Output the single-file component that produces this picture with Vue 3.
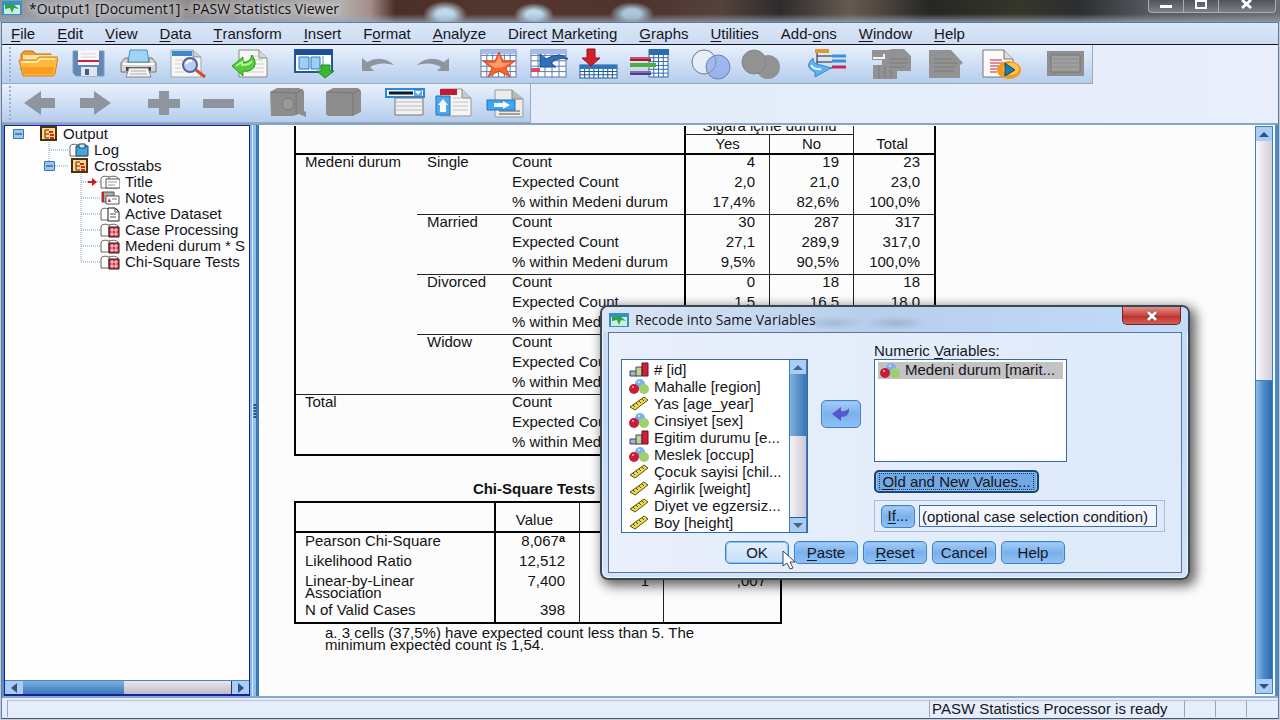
<script setup>
const menus = [
  ['', 'F', 'ile'], ['', 'E', 'dit'], ['', 'V', 'iew'], ['', 'D', 'ata'], ['', 'T', 'ransform'],
  ['', 'I', 'nsert'], ['F', 'o', 'rmat'], ['', 'A', 'nalyze'], ['Direct ', 'M', 'arketing'],
  ['', 'G', 'raphs'], ['', 'U', 'tilities'], ['Add-', 'o', 'ns'], ['', 'W', 'indow'], ['', 'H', 'elp']
]

const page = '<path d="M7 2h20l8 8v19H7z" fill="#f7f7f5" stroke="#888"/><path d="M27 2v8h8" fill="#ddd" stroke="#888"/>'
const cells = (x, y, w, h, c, r, col) => {
  let s = `<rect x="${x}" y="${y}" width="${w}" height="${h}" fill="#fff" stroke="${col}"/>`
  for (let i = 1; i < c; i++) s += `<path d="M${x + (w * i) / c} ${y}v${h}" stroke="${col}"/>`
  for (let i = 1; i < r; i++) s += `<path d="M${x} ${y + (h * i) / r}h${w}" stroke="${col}"/>`
  return s
}
const art = {
  open: '<path d="M3 22V6l3-3h9l3 3h15v5H8z" fill="#f59a2c" stroke="#c96e10"/><path d="M5 7h31v6H5z" fill="#ffe3a0"/><path d="M1 12h17l3-3h19l-3 17-2 2H5z" fill="#fdb83d" stroke="#d9801a"/><path d="M3 14h16l3-3h15" fill="none" stroke="#ffe9a8" stroke-width="2"/><path d="M5 26h30l1-7H4z" fill="#f89c22"/>',
  save: '<path d="M5 3h31v25H8l-3-3z" fill="#5f88b4" stroke="#7f9fc0"/><path d="M10 2h21v15H10z" fill="#f4f6fa"/><path d="M13 6h15M13 9h15" stroke="#d4d8e0"/><path d="M10 13h21" stroke="#d0203c" stroke-width="2"/><path d="M13 19h16v9H13z" fill="#dfe5ec"/><path d="M17 21h4v6h-4z" fill="#435f80"/>',
  print: '<path d="M12 2h17l2 12H10z" fill="#9ed3f5" stroke="#4c8fc4"/><path d="M7 10h3v5h21v-5h3l4 5v9H3v-9z" fill="#d4d4d4" stroke="#777"/><path d="M5 16h31" stroke="#fff" stroke-width="2"/><path d="M8 19h25v4H8z" fill="#444"/><path d="M11 20h19l3 9H8z" fill="#f4f4f4" stroke="#888"/><path d="M13 23h15M12 26h17" stroke="#aaa"/>',
  find: '<path d="M3 2h22l8 7v20H3z" fill="#f7f7f7" stroke="#9aa"/><path d="M25 2v7h8" fill="#ccd" stroke="#889"/><path d="M4 3h20v5H4z" fill="#3d87c8"/><path d="M7 12h8M7 16h6M7 20h6M7 24h9" stroke="#ccc"/><path d="M28 22l9 7" stroke="#d8482c" stroke-width="3"/><circle cx="22" cy="17" r="7" fill="#b9cdf3" stroke="#5560a0" stroke-width="2"/><path d="M18 16q2-4 6-3" stroke="#fff" fill="none" stroke-width="2"/>',
  export: page + '<path d="M17 8h14M17 12h14M17 16h15M15 20h17M15 24h17" stroke="#ccc"/><path d="M0 18l11-9v5q7 1 9-7 7 10-1 15-3 2-8 1v5z" fill="#55cc38" stroke="#2c9a20"/><path d="M4 18l6-4v3q8 0 10-4" stroke="#b4f49a" fill="none" stroke-width="2"/>',
  recall: '<path d="M1 2h37v22H1z" fill="#fff" stroke="#24549a" stroke-width="2"/><path d="M1 1h37v6H1z" fill="#1d4f98"/><path d="M5 9h10v12H5zM17 9h9v12h-9z" fill="#9bd0f4" stroke="#2d77bd"/><path d="M29 8v15" stroke="#9bd0f4" stroke-width="2"/><path d="M27 17h9v6h4l-9 7-8-7h4z" fill="#39b92e" stroke="#1f861d"/>',
  undo: '<path d="M4 10v13h12l-4-4q10-6 24-2Q24 6 9 14z" fill="#8f959e"/>',
  redo: '<path d="M36 10v13H24l4-4Q18 13 4 17 16 6 31 14z" fill="#8f959e"/>',
  star: cells(2, 2, 35, 27, 6, 5, '#5f7ab4') + '<path d="M2 2h35v4H2z" fill="#a7bcea"/><path d="M20 4l4 9h12l-9 7 4 9-11-6-11 6 4-9-9-7h12z" fill="#f4672c" stroke="#d9481c"/><path d="M20 7l3 8h8l-7 4-8 1-7-5h8z" fill="#ff9b70"/>',
  gocase: cells(2, 2, 35, 27, 5, 5, '#5f7ab4') + '<path d="M2 2h35v4H2z" fill="#a7bcea"/><path d="M2 20h9v4H2z" fill="#d94a6c"/><path d="M11 6v13h16l-5-4q6-6 17-4-8-8-22 0z" fill="#2f70bd" stroke="#1d4f8f"/>',
  govar: cells(1, 17, 37, 13, 8, 4, '#1f5b9c') + '<path d="M1 17h37v4H1z" fill="#2b79bd"/><path d="M8 1h8v9h5l-9 8-9-8h5z" fill="#d21f28" stroke="#93131a"/>',
  vars: cells(20, 2, 19, 27, 4, 7, '#2b6cb0') + '<path d="M20 1h20v6H20z" fill="#2b6cb0"/><path d="M1 11h21" stroke="#a71c35" stroke-width="4"/><path d="M1 17h26" stroke="#4faf37" stroke-width="4"/><path d="M1 25h21" stroke="#39459c" stroke-width="4"/><path d="M1 10h21M1 24h21" stroke="#e58a9a"/>',
  rings: '<circle cx="13" cy="14" r="12" fill="#eef2f8" fill-opacity=".7" stroke="#8b93a3"/><circle cx="27" cy="19" r="12" fill="#8fabed" fill-opacity=".8" stroke="#7480a8"/><circle cx="13" cy="14" r="12" fill="none" stroke="#8b93a3"/>',
  blobs: '<circle cx="13" cy="14" r="12" fill="#929292"/><circle cx="27" cy="19" r="12" fill="#929292"/><circle cx="13" cy="14" r="12" fill="none" stroke="#858585"/>',
  flow: '<path d="M10 4v13M10 8h15M10 14h15M10 20h15" stroke="#222" fill="none"/><path d="M8 3h14" stroke="#e8962c" stroke-width="4"/><path d="M25 8h14M25 13h14" stroke="#3d8fd6" stroke-width="3"/><path d="M25 19h14" stroke="#c02a55" stroke-width="3"/><path d="M6 10q-10 9 2 14v5l16-9-10-3q-8 0-8-7z" fill="#5fb2ef" stroke="#3a86c9"/><path d="M4 17q3 5 10 4" fill="none" stroke="#dff2ff" stroke-width="2"/>',
  pages: '<path d="M1 2h16l4-1h12l7 7v15H26v8H2V17h9v-5H1z" fill="#929292"/><path d="M2 10h11V6" stroke="#f3f5f8" stroke-width="2" fill="none"/><path d="M19 11h18M19 15h18M19 19h15M8 18v12M14 18v12M20 22v8" stroke="#7c7c7c"/>',
  note: '<path d="M3 2h22l12 13-3 2v13H3z" fill="#929292"/><path d="M8 11h18M8 15h24M8 19h22M8 23h20" stroke="#7c7c7c"/>',
  script: '<path d="M2 2h21l9 9v18H2z" fill="#fafafa" stroke="#777"/><path d="M23 2v9h9" fill="#ddd" stroke="#777"/><path d="M9 12h12M9 15h15M9 18h9M9 21h10M9 24h7" stroke="#c3203c"/><ellipse cx="28" cy="22" rx="12" ry="9" fill="#f29a1c"/><ellipse cx="30" cy="21" rx="8" ry="6" fill="#ffc452"/><path d="M24 15l10 7-10 6z" fill="#1e7da8" stroke="#0e4d70"/>',
  frame: '<path d="M2 3h37v25H2z" fill="#8f8f8f"/><path d="M6 7h29v17H6z" fill="#9e9e9e" stroke="#777"/><path d="M8 11h25M8 15h25M8 19h25" stroke="#8c8c8c"/>',
  left: '<path d="M4 16L21 4v7h14v10H21v7z" fill="#8f959e"/>',
  right: '<path d="M36 16L19 4v7H5v10h14v7z" fill="#8f959e"/>',
  plus: '<path d="M15 4h10v8h11v9H25v7H15v-7H4v-9h11z" fill="#8f959e"/>',
  minus: '<path d="M4 12h31v9H4z" fill="#8f959e"/>',
  book1: '<path d="M2 5l7-4h22l5 3v20l2 1v5l-7-3-6 2H3z" fill="#8d8d8d"/><path d="M3 5l25 1v22M28 6l7-4" stroke="#777" fill="none"/><circle cx="20" cy="17" r="6" fill="#999" stroke="#7a7a7a"/>',
  book2: '<path d="M3 5l7-4h25l3 3v21l-8 4H5l-2-2z" fill="#8d8d8d"/><path d="M4 5l26 1v22M30 6l7-3" stroke="#777" fill="none"/>',
  combo: '<path d="M1 2h38v8H1z" fill="#eaf5ff" stroke="#2d86d8" stroke-width="2"/><path d="M4 6h24" stroke="#0b1a33" stroke-width="3"/><path d="M29 3h8v6h-8z" fill="#5aa8ea"/><path d="M30 4h6l-3 4z" fill="#fff"/><path d="M10 11h28v17H10z" fill="#f2f2f2" stroke="#777"/><path d="M11 15h26M11 19h26M11 23h26" stroke="#bbb"/>',
  promote: '<path d="M6 2h21l9 9v18H6z" fill="#f5f5f5" stroke="#999"/><path d="M27 2v9h9" fill="#ccc" stroke="#888"/><path d="M5 2h17v6H5z" fill="#c5192e"/><path d="M18 11h8M18 15h15M18 19h15M18 23h15" stroke="#c4c4c4"/><path d="M1 9h14v19H1z" fill="#4fa9ea" stroke="#1d72bd"/><path d="M8 12l5 6h-2v7H5v-7H3z" fill="#f4fbff"/>',
  insert: '<path d="M10 3h17l11 9v18H10z" fill="#ecece8" stroke="#999"/><path d="M27 3v9h11" fill="#bbb" stroke="#888"/><path d="M14 27h21M14 24h21" stroke="#555"/><path d="M2 13h28v10H2z" fill="#42a5ee" stroke="#1b74c4"/><path d="M9 16h9v-2l7 4-7 4v-2H9z" fill="#f4fbff"/>'
}
const bar1 = [
  { items: ['open', 'save', 'print', 'find'] }, { items: ['export'] }, { items: ['recall'], near: true },
  { items: ['undo', 'redo'], loose: true }, { items: ['star', 'gocase', 'govar', 'vars'], far: true },
  { items: ['rings', 'blobs'], near: true }, { items: ['flow'], far: true },
  { items: ['pages', 'note', 'script'], loose: true }, { items: ['frame'] }
]
const bar2 = [
  { items: ['left', 'right'], loose: true }, { items: ['plus', 'minus'], loose: true, far: true },
  { items: ['book1', 'book2'], loose: true, far: true }, { items: ['combo', 'promote', 'insert'], near: true }
]

const book = '<path d="M1 14V4q2-3 8-1 6-2 9 1v10z" fill="#fff" stroke="#666"/><path d="M9 3v10" stroke="#666"/>'
const nodeArt = {
  root: '<path d="M3 1h15v13H3z" fill="#fbdc86" stroke="#4a3315" stroke-width="2"/><path d="M2 4h2M2 7h2M2 10h2" stroke="#222"/><path d="M7 4v8M7 4h4M7 8h4M7 12h4" stroke="#7a1d12"/><path d="M11 6h4M12 9h4M12 12h4" stroke="#d22" stroke-width="2"/>',
  log: book + '<path d="M7 4h12v10H7z" fill="#4aa5d4" stroke="#134a6e"/><path d="M10 2h6v4h-6z" fill="#cdeafa" stroke="#134a6e"/>',
  title: book + '<path d="M6 5h14v9H6z" fill="#fff" stroke="#555"/><path d="M8 8h9M8 11h7" stroke="#999"/>',
  notes: '<path d="M2 2h12v10H2z" fill="#aaa" stroke="#555"/><path d="M3 2v10" stroke="#c22" stroke-width="2"/><path d="M6 6h13v8H6z" fill="#fff" stroke="#555"/><path d="M9 8l-1 4h3z" fill="#c2185b"/><path d="M12 9h5" stroke="#777"/>',
  data: book + '<path d="M8 2h7l4 4v9H8z" fill="#fff" stroke="#222"/><path d="M15 2v4h4M10 8h6M10 11h6" stroke="#555" fill="none"/>',
  table: book + '<path d="M9 5h10v10H9z" fill="#c8384c" stroke="#301015"/><path d="M10 8h8M10 12h8M12 6v8M16 6v8" stroke="#f6dede"/>'
}
const tree = [
  { d: 0, i: 'root', t: 'Output' }, { d: 1, i: 'log', t: 'Log' }, { d: 1, i: 'root', t: 'Crosstabs', box: true },
  { d: 2, i: 'title', t: 'Title', now: true }, { d: 2, i: 'notes', t: 'Notes' }, { d: 2, i: 'data', t: 'Active Dataset' },
  { d: 2, i: 'table', t: 'Case Processing' }, { d: 2, i: 'table', t: 'Medeni durum * S' },
  { d: 2, i: 'table', t: 'Chi-Square Tests', last: true }
]
const gutter = [32, 63, 94]

const L = ['Count', 'Expected Count', '% within Medeni durum']
const rows = [
  ['Medeni durum', 'Single', L[0], '4', '19', '23'], ['', '', L[1], '2,0', '21,0', '23,0'], ['', '', L[2], '17,4%', '82,6%', '100,0%'],
  ['', 'Married', L[0], '30', '287', '317'], ['', '', L[1], '27,1', '289,9', '317,0'], ['', '', L[2], '9,5%', '90,5%', '100,0%'],
  ['', 'Divorced', L[0], '0', '18', '18'], ['', '', L[1], '1,5', '16,5', '18,0'], ['', '', L[2], '', '', ''],
  ['', 'Widow', L[0], '', '', ''], ['', '', L[1], '', '', ''], ['', '', L[2], '', '', ''],
  ['Total', '', L[0], '', '', ''], ['', '', L[1], '', '', ''], ['', '', L[2], '', '', '']
]

const varArt = {
  ord: '<path d="M1 10h7v5H1z" fill="#9db4d8" stroke="#445"/><path d="M7 6h6v9H7z" fill="#b9d6a0" stroke="#445"/><path d="M13 2h6v13h-6z" fill="#cf2039" stroke="#612"/>',
  nom: '<circle cx="11" cy="6" r="5" fill="#7fb0ea"/><circle cx="15" cy="11" r="5" fill="#9fd070"/><circle cx="5" cy="11" r="5" fill="#c81f38"/><circle cx="4" cy="9" r="1" fill="#f8b8b8"/><circle cx="10" cy="4" r="1" fill="#dcecff"/>',
  scale: '<path d="M1 12L15 2l4 3L6 15z" fill="#ecd84c" stroke="#55501a"/><path d="M4 10l2 2M7 8l2 2M10 6l2 2M13 4l2 2" stroke="#55501a"/>'
}
const vars = [
  ['ord', '# [id]'], ['nom', 'Mahalle [region]'], ['scale', 'Yas [age_year]'], ['nom', 'Cinsiyet [sex]'],
  ['ord', 'Egitim durumu [e...'], ['nom', 'Meslek [occup]'], ['scale', 'Çocuk sayisi [chil...'],
  ['scale', 'Agirlik [weight]'], ['scale', 'Diyet ve egzersiz...'], ['scale', 'Boy [height]']
]
const actions = [['', 'OK'], ['P', 'aste'], ['R', 'eset'], ['', 'Cancel'], ['', 'Help']]
</script>

<template>
  <div class="app">
    <header class="titlebar">
      <svg class="logo" viewBox="0 0 20 16"><path d="M0 1h20v14H0z" fill="#3391c4" /><path d="M2 5h16v9H2z" fill="#c9efdc" /><path d="M3 5l8-1 6 5-5-1-2 5-2-5-5 1z" fill="#2fa34b" /></svg>
      <span class="caption">*Output1 [Document1] - PASW Statistics Viewer</span>
      <div class="winbtns">
        <button aria-label="Minimize"><svg viewBox="0 0 14 12"><path d="M1 5h12v3H1z" fill="#fff" /></svg></button>
        <button aria-label="Maximize"><svg viewBox="0 0 14 12"><path d="M2 1h10v7H2z" fill="none" stroke="#fff" stroke-width="2" /></svg></button>
        <button class="x" aria-label="Close"><svg viewBox="0 0 14 12"><path d="M2 0l9 8M11 0L2 8" stroke="#fff" stroke-width="3" /></svg></button>
      </div>
    </header>

    <div class="frame">
      <nav class="menubar">
        <button v-for="m in menus" :key="m.join('')">{{ m[0] }}<u>{{ m[1] }}</u>{{ m[2] }}</button>
      </nav>
      <div class="bars">
        <div v-for="(bar, n) in [bar1, bar2]" :key="n" class="toolbar" :class="{ second: n === 1 }">
          <div v-for="(g, k) in bar" :key="k" class="group" :class="{ near: g.near, far: g.far, loose: g.loose }">
            <button v-for="i in g.items" :key="i" :aria-label="i"><svg viewBox="0 0 40 32" v-html="art[i]"></svg></button>
          </div>
        </div>
      </div>

      <main class="split">
        <aside class="outline">
          <ul class="tree">
            <li v-for="r in tree" :key="r.t">
              <svg :width="gutter[r.d]" height="16" :viewBox="`0 0 ${gutter[r.d]} 16`">
                <g stroke="#7f9fc4" stroke-dasharray="1 1" fill="none">
                  <path v-if="r.d === 1" :d="r.box ? 'M43 0v8h20' : 'M43 0v16M43 8h20'" />
                  <path v-if="r.d === 2" :d="r.last ? 'M75 0v8h19' : 'M75 0v16M75 8h19'" />
                </g>
                <g v-if="r.d === 0 || r.box" :transform="r.d === 0 ? 'translate(7 3)' : 'translate(38 3)'">
                  <path d="M.5 .5h10v9H.5z" fill="#9cc7f2" stroke="#3d74b8" /><path d="M2 5h7" stroke="#123a78" />
                </g>
                <path v-if="r.now" d="M82 7h4V4l5 4-5 4V9h-4z" fill="#d3122c" />
              </svg>
              <svg class="node" viewBox="0 0 20 16" v-html="nodeArt[r.i]"></svg>
              <span>{{ r.t }}</span>
            </li>
          </ul>
          <div class="hscroll">
            <button aria-label="Scroll left"><svg viewBox="0 0 12 12"><path d="M9 1v10L3 6z" fill="#34507c" /></svg></button>
            <div class="hthumb"></div>
            <div class="htrack"></div>
            <button class="end" aria-label="Scroll right"><svg viewBox="0 0 12 12"><path d="M3 1v10l6-5z" fill="#34507c" /></svg></button>
          </div>
        </aside>
        <div class="divider"><svg viewBox="0 0 6 14"><path d="M3 0v14" stroke="#28548c" stroke-width="3" stroke-dasharray="2 1" /></svg></div>

        <section class="viewer">
          <div class="doc">
            <table class="cross">
              <colgroup><col class="w121"><col class="w85"><col class="w182"><col class="w85"><col class="w84"><col class="w81"></colgroup>
              <thead>
                <tr class="top"><th colspan="3"></th><th colspan="2" class="thick"><div class="cut"><span>Sigara içme durumu</span></div></th><th class="thin"></th></tr>
                <tr class="names"><th colspan="3"></th><th class="thick line">Yes</th><th class="thin line">No</th><th class="thin sum">Total</th></tr>
              </thead>
              <tbody>
                <tr v-for="(r, n) in rows" :key="n" :class="{ first: n === 0, start: n > 0 && n % 3 === 0, whole: n === 12 }">
                  <td v-for="(c, k) in r" :key="k" :class="{ num: k > 2, thick: k === 3, thin: k > 3 }">{{ c }}</td>
                </tr>
              </tbody>
            </table>

            <table class="chi">
              <caption>Chi-Square Tests</caption>
              <colgroup><col class="w198"><col class="w85"><col class="w84"><col class="w117"></colgroup>
              <thead><tr><th></th><th class="thick">Value</th><th class="thin"></th><th class="thin"></th></tr></thead>
              <tbody>
                <tr><td>Pearson Chi-Square</td><td class="num thick">8,067<sup>a</sup></td><td class="thin"></td><td class="thin"></td></tr>
                <tr><td>Likelihood Ratio</td><td class="num thick">12,512</td><td class="thin"></td><td class="thin"></td></tr>
                <tr class="tall"><td><div class="tight">Linear-by-Linear<br>Association</div></td><td class="num thick">7,400</td><td class="num thin">1</td><td class="num thin">,007</td></tr>
                <tr><td>N of Valid Cases</td><td class="num thick">398</td><td class="thin"></td><td class="thin"></td></tr>
              </tbody>
            </table>
            <p class="foot">a. 3 cells (37,5%) have expected count less than 5. The<br>minimum expected count is 1,54.</p>
          </div>
          <div class="vscroll">
            <button aria-label="Scroll up"><svg viewBox="0 0 12 12"><path d="M1 9h10L6 4z" fill="#34507c" /></svg></button>
            <div class="vtrack"></div>
            <div class="vthumb"></div>
            <button aria-label="Scroll down"><svg viewBox="0 0 12 12"><path d="M1 4h10L6 9z" fill="#34507c" /></svg></button>
          </div>
        </section>
      </main>

      <footer class="status">
        <span class="grow"></span><span class="msg">PASW Statistics Processor is ready</span><span class="slot"></span><span class="slot"></span><span class="slot"></span>
      </footer>
    </div>

    <div class="dialog" role="dialog" aria-labelledby="dlg">
      <div class="dtitle">
        <svg class="logo" viewBox="0 0 20 16"><path d="M0 1h20v14H0z" fill="#3391c4" /><path d="M2 5h16v9H2z" fill="#c9efdc" /><path d="M3 5l8-1 6 5-5-1-2 5-2-5-5 1z" fill="#2fa34b" /></svg>
        <span id="dlg">Recode into Same Variables</span>
        <button class="close" aria-label="Close"><svg viewBox="0 0 14 12"><path d="M3 2l8 8M11 2l-8 8" stroke="#6b2a2a" stroke-width="4" /><path d="M3 2l8 8M11 2l-8 8" stroke="#fff" stroke-width="3" /></svg></button>
      </div>
      <div class="dbody">
        <div class="cols">
          <div class="source">
            <ul>
              <li v-for="v in vars" :key="v[1]"><svg class="kind" viewBox="0 0 20 16" v-html="varArt[v[0]]"></svg>{{ v[1] }}</li>
            </ul>
            <div class="lscroll">
              <button aria-label="Up"><svg viewBox="0 0 12 12"><path d="M1 9h10L6 4z" fill="#47658f" /></svg></button>
              <div class="lthumb"></div>
              <div class="ltrack"></div>
              <button aria-label="Down"><svg viewBox="0 0 12 12"><path d="M1 4h10L6 9z" fill="#47658f" /></svg></button>
            </div>
          </div>
          <button class="btn move" aria-label="Move variable"><svg viewBox="0 0 20 16"><path d="M1 8l9-7v4q5 1 8-3 1 9-8 9v4z" fill="#5558cc" /></svg></button>
          <div class="target">
            <div id="nv" class="lbl">Numeric <u>V</u>ariables:</div>
            <ul class="picked" aria-labelledby="nv"><li><svg class="kind" viewBox="0 0 20 16" v-html="varArt.nom"></svg>Medeni durum [marit...</li></ul>
            <button class="btn old"><span><u>O</u>ld and New Values...</span></button>
            <div class="cond">
              <button class="btn if"><u>If</u>...</button>
              <input aria-label="Case selection condition" readonly value="(optional case selection condition)">
            </div>
          </div>
        </div>
        <div class="actions">
          <button v-for="a in actions" :key="a[1]" class="btn" :class="{ hot: a[1] === 'OK' }"><u>{{ a[0] }}</u>{{ a[1] }}</button>
        </div>
      </div>
    </div>
    <svg class="pointer" viewBox="0 0 14 20"><path d="M1 1v15l4-3 3 6 3-1-3-6h5z" fill="#fff" stroke="#445" /></svg>
  </div>
</template>

<style>
body { margin: 0; }
</style>

<style scoped>
* { box-sizing: border-box; }
.app {
  height: 100vh; display: flex; flex-direction: column; position: relative; overflow: hidden;
  font-family: "Liberation Sans", Arial, sans-serif; font-size: 15px; line-height: 16px; color: #15151c;
  background: #c4cddc;
}
button { font: inherit; color: inherit; margin: 0; padding: 0; border: 0; background: none; display: flex; align-items: center; justify-content: center; white-space: pre; }
ul { list-style: none; margin: 0; padding: 0; }
u { text-underline-offset: 2px; }
svg { display: block; flex: none; }

.titlebar {
  height: 22px; flex: none; display: flex; align-items: flex-start; padding-left: 2px;
  background:
    linear-gradient(to bottom, transparent 14px, rgba(150, 165, 185, .75) 22px),
    radial-gradient(ellipse 22px 14px at 445px 15px, #bcd8ea 40%, transparent 100%),
    radial-gradient(ellipse 20px 12px at 534px 15px, #bcd8ea 40%, transparent 100%),
    radial-gradient(ellipse 22px 12px at 632px 14px, #a9c6da 40%, transparent 100%),
    linear-gradient(to right, #8f9299 0, #a5a5aa 80px, #8c8888 200px, #b3afae 340px, #a58f8c 370px, #4c2e28 395px, #54372f 500px, #4d332e 640px, #55423c 720px, #2f2b2c 780px, #665a50 850px, #262624 930px, #37362a 1020px, #2c2e30 1080px, #565960 1150px, #6a6d74 1280px);
}
.logo { width: 20px; height: 16px; }
.caption { flex: 1; margin-left: 7px; font: 14px/18px "Open Sans", "Noto Sans", sans-serif; color: #101014; text-shadow: 0 0 6px #e4e4e8, 0 0 6px #e4e4e8; }
.winbtns { display: flex; margin-right: 4px; border: 1px solid #a8abb2; border-top: 0; border-radius: 0 0 4px 4px; background: linear-gradient(#50535a, #7c7f86); }
.winbtns button { width: 35px; height: 12px; border-right: 1px solid #a8abb2; align-items: flex-start; }
.winbtns .x { width: 56px; border: 0; }
.winbtns svg { width: 14px; height: 12px; }

.frame { flex: 1; min-height: 0; margin: 0 1px 1px; border: 1px solid #5f7c9c; border-bottom: 1px solid #47556b; display: flex; flex-direction: column; background: #e6edfa; }
.menubar { height: 22px; flex: none; display: flex; gap: 22px; padding-left: 9px; background: linear-gradient(#d9e6f7, #cddcf1); border-bottom: 1px solid #10141c; }
.bars { flex: none; border-bottom: 2px solid #86a5c4; background: linear-gradient(to right, #e2ebf8, #e8eefb); }
.toolbar { height: 39px; width: fit-content; display: flex; align-items: center; padding: 0 2px 0 11px; border: solid #9aaabd; border-width: 0 1px 1px 0; background: linear-gradient(#e9f1fc, #cfdff5 50%, #b5cdec); position: relative; }
.toolbar::before { content: ""; position: absolute; left: 7px; top: 2px; bottom: 2px; border-left: 2px dotted #9fb2cb; }
.second { padding: 0 0 0 13px; }
.group { display: flex; margin-left: 14px; }
.group:first-child { margin-left: 0; }
.near { margin-left: 12px; }
.far { margin-left: 16px; }
.second .far { margin-left: 19px; }
.loose { gap: 5px; }
.group button { width: 50px; height: 36px; }
.group svg { width: 40px; height: 32px; }

.split { flex: 1; min-height: 0; display: flex; border-left: 2px solid #5b8fc9; border-bottom: 2px solid #86a9d4; }
.outline { width: 246px; flex: none; border: 1px solid #1c1f9c; border-bottom-width: 2px; background: #fdfdfe; display: flex; flex-direction: column; overflow: hidden; }
.tree { flex: 1; min-height: 0; overflow: hidden; padding-left: 1px; }
.tree li { display: flex; height: 16px; white-space: nowrap; }
.node { width: 20px; height: 16px; margin-right: 5px; }
.hscroll { display: flex; height: 14px; flex: none; border-top: 1px solid #4d86bd; }
.hscroll button { width: 18px; background: #a9cdf5; }
.hscroll .end { border-left: 1px solid #1b3c70; }
.hscroll svg, .vscroll svg, .lscroll svg { width: 12px; height: 12px; }
.hthumb { flex: 100; background: linear-gradient(#7ab0e2, #3a78ba); }
.htrack { flex: 105; background: linear-gradient(#e9e6ee, #bfbccb); }
.divider { width: 9px; flex: none; background: linear-gradient(to right, #8fb6de 0 2px, #d9ecfc 2px 3px, #8cc2f0 3px 6px, #3c78b4 6px 9px); display: flex; align-items: center; }
.divider svg { width: 6px; height: 14px; margin-left: 2px; }

.viewer { flex: 1; min-width: 0; display: flex; background: #fdfcfd; border-right: 3px solid #4a8bc9; }
.doc { flex: 1; min-width: 0; overflow: hidden; padding-left: 35px; color: #131313; }
.vscroll { width: 18px; margin: 1px 2px 2px 0; display: flex; flex-direction: column; border: 1px solid #3f82c0; }
.vscroll button { height: 14px; background: #a9cdf5; }
.vtrack { flex: 240; background: linear-gradient(to right, #faf6f9, #d3cedb); border-bottom: 1px solid #3f82c0; }
.vthumb { flex: 300; background: linear-gradient(to right, #8dbbe6, #4a8cc8 50%, #2c6aae); }

table { table-layout: fixed; border-collapse: separate; border-spacing: 0; border: 2px solid #050505; }
.cross { width: 642px; border-top: 0; margin-top: 1px; }
.chi { width: 488px; margin-top: 23px; }
.w81 { width: 81px; } .w84 { width: 84px; } .w85 { width: 85px; } .w117 { width: 117px; }
.w121 { width: 121px; } .w182 { width: 182px; } .w198 { width: 198px; }
th, td { padding: 0 0 0 10px; font-weight: 400; text-align: left; vertical-align: top; white-space: nowrap; line-height: 15px; height: 20px; }
td:first-child { padding-left: 9px; }
th { text-align: center; padding: 0; }
.num { text-align: right; padding: 0 14px 0 0; }
.thick { border-left: 2px solid #050505; }
.thin { border-left: 1px solid #222; }
.top th { height: 8px; }
.cut { height: 8px; overflow: hidden; display: flex; align-items: flex-end; justify-content: center; padding-bottom: 1px; }
.names th { height: 19px; line-height: 17px; }
.names .line { border-top: 1px solid #222; }
.names .sum { padding: 1px 4px 0 0; }
.first td { border-top: 2px solid #050505; height: 21px; line-height: 13px; }
.start td { line-height: 14px; }
.start td:nth-child(n + 2), .whole td { border-top: 1px solid #222; }
.chi caption { font-weight: 700; height: 22px; line-height: 20px; padding-right: 8px; }
.chi thead th { height: 30px; vertical-align: bottom; line-height: 18px; padding: 0 6px 2px 0; border-bottom: 2px solid #050505; }
.chi td { line-height: 16px; }
.chi .tall td { height: 29px; }
.chi .tight { line-height: 12px; padding-top: 2px; }
sup { font-size: 11px; line-height: 0; font-weight: 700; vertical-align: 4px; }
.foot { margin: 3px 0 0 31px; line-height: 12px; white-space: nowrap; }

.status { height: 20px; flex: none; display: flex; padding: 2px 1px 1px 5px; background: #e6edfa; }
.status span { border-left: 1px solid #97a5ba; border-top: 1px solid #b9c4d6; }
.grow { flex: 1; }
.msg { width: 255px; padding-left: 2px; white-space: nowrap; }
.slot { width: 31px; }

.dialog {
  position: absolute; left: 600px; top: 305px; width: 590px; border: 2px solid #3b4654; border-radius: 8px; padding: 0 6px 5px;
  background: linear-gradient(#c8dcf3, #c1dafa 40%, #d3e2f5); box-shadow: 4px 4px 12px 2px rgba(0, 0, 0, .6), inset 0 0 0 1px #edf5ff;
}
.dtitle { height: 25px; display: flex; align-items: center; font: 14px/18px "Open Sans", "Noto Sans", sans-serif; margin: 0 -6px; padding: 0 7px; border-radius: 6px 6px 0 0; background: radial-gradient(ellipse 30px 7px at 232px 16px, #a3b8d3, transparent), radial-gradient(ellipse 30px 7px at 294px 16px, #9db3cf, transparent), linear-gradient(to right, #dbe6f4, #b7cfec 45%, #c2dbf8); }
.dtitle span { flex: 1; margin-left: 6px; }
.close { width: 59px; height: 18px; align-self: flex-start; border: 1px solid #6d2327; border-top: 0; border-radius: 0 0 5px 5px; background: linear-gradient(#e0908a, #c9453f 50%, #b92e2c 50%, #d35f55); }
.close svg { width: 14px; height: 12px; }
.dbody { border: 1px solid #56759a; background: linear-gradient(to right, #e9effb, #deeafa); padding: 9px 12px 8px; }
.cols { display: flex; }
.source { width: 187px; height: 174px; margin-top: 17px; border: 1px solid #3569a5; background: #fff; display: flex; }
.source ul { flex: 1; min-width: 0; overflow: hidden; padding: 1px 0 0 7px; }
.kind { width: 20px; height: 16px; }
.source li { display: flex; gap: 5px; height: 17px; line-height: 17px; white-space: nowrap; }
.lscroll { width: 18px; display: flex; flex-direction: column; border-left: 1px solid #3d7dbd; border-right: 1px solid #3d7dbd; }
.lscroll button { height: 14px; background: #a9cdf5; }
.lthumb { flex: 62; background: linear-gradient(to right, #80b1e0, #3874b4); }
.ltrack { flex: 82; background: linear-gradient(to right, #f7f2f5, #cdc8d6); border-bottom: 1px solid #2d5a94; }
.btn { border: 1px solid #3f82c4; border-radius: 5px; background: linear-gradient(#a6cdf8, #79b0ec 50%, #8fc1f4); height: 23px; line-height: 16px; box-shadow: inset 0 0 0 1px #8cc0f6; }
.move { width: 40px; height: 28px; margin: 58px 13px 0 13px; flex: none; }
.move svg { width: 20px; height: 16px; }
.target { flex: 1; padding-right: 2px; }
.lbl { height: 17px; line-height: 17px; }
.picked { width: 193px; height: 103px; border: 1px solid #3569a5; background: #fff; padding: 2px 3px; }
.picked li { display: flex; gap: 5px; height: 17px; padding-left: 2px; background: #c3c2c5; white-space: nowrap; overflow: hidden; line-height: 16px; }
.old { width: 165px; margin-top: 8px; border: 2px solid #1d4471; background: #70a9e4; }
.old span { border: 1px dotted #17365e; padding: 0 2px; line-height: 15px; }
.cond { width: 291px; height: 32px; margin-top: 7px; border: 1px solid #a9bcd6; display: flex; align-items: center; padding: 0 7px 0 6px; gap: 4px; }
.if { width: 34px; flex: none; }
.cond input { flex: 1; min-width: 0; height: 22px; border: 1px solid #3c70ac; background: #f3f7fd; font: inherit; color: inherit; padding: 0 2px; margin: 0; border-radius: 0; outline: none; }
.actions { display: flex; gap: 5px; margin: 8px 0 0 104px; }
.actions .btn { width: 64px; }
.actions .hot { background: linear-gradient(#e3effc, #c5dff9); }
.pointer { position: absolute; left: 782px; top: 550px; width: 14px; height: 20px; }
</style>
